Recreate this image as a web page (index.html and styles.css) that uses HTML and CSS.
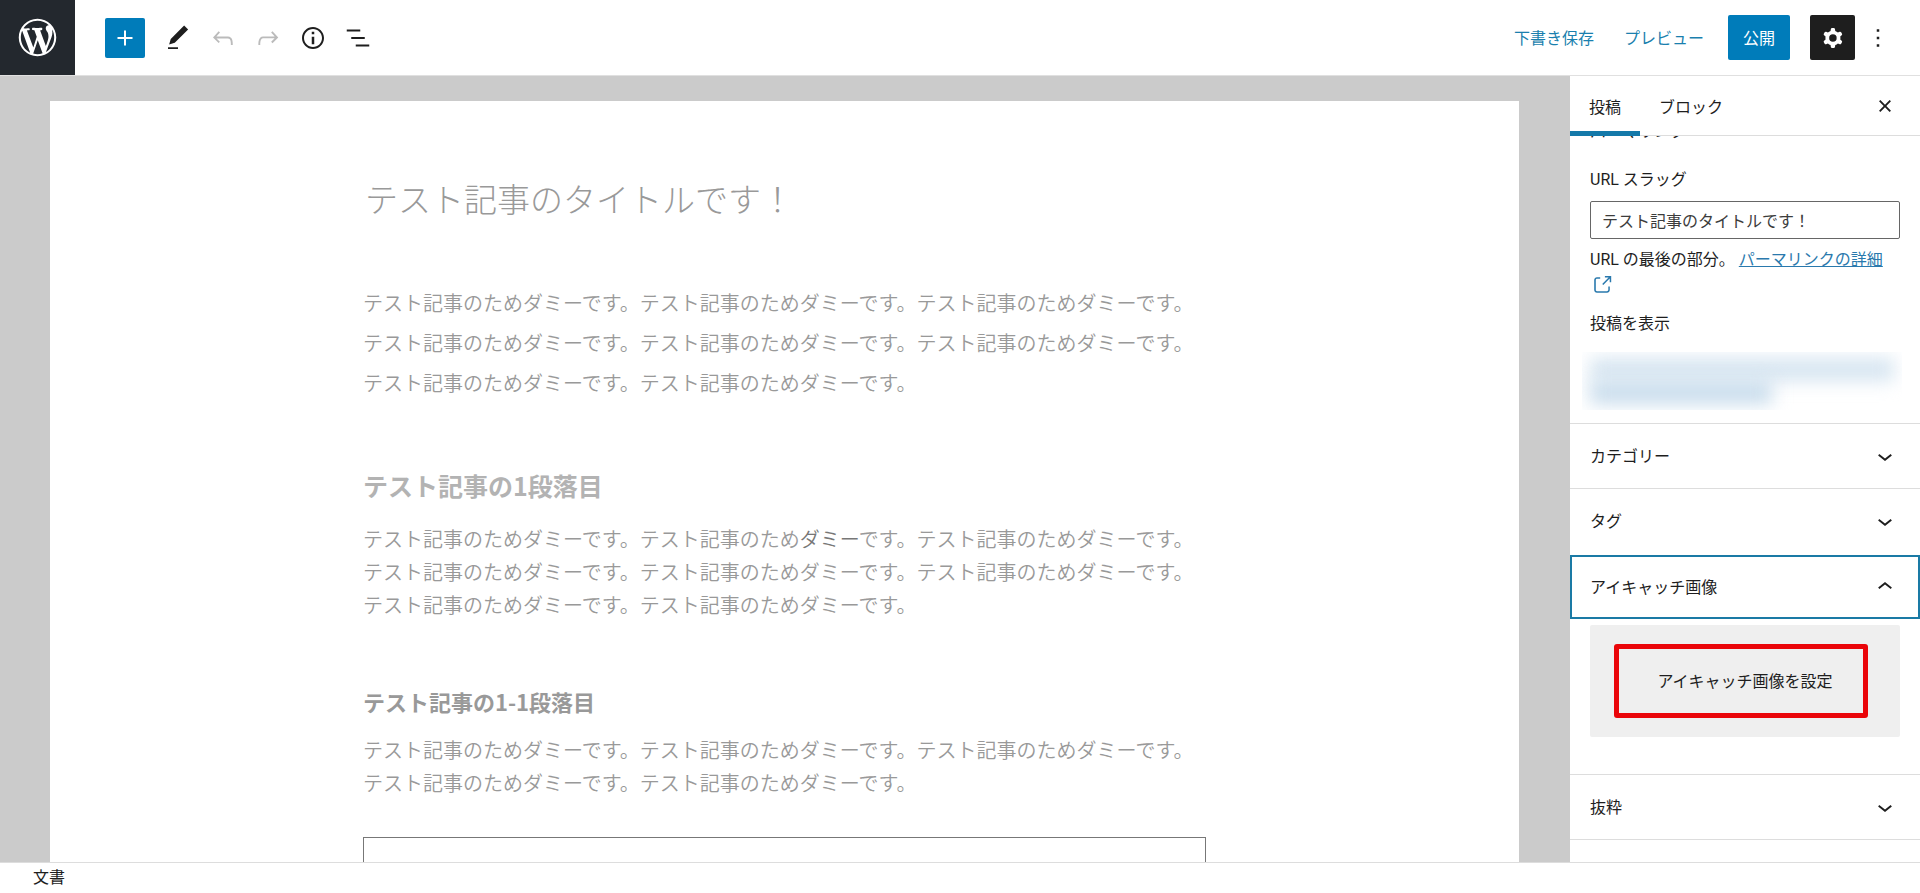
FILE: index.html
```html
<!DOCTYPE html>
<html lang="ja">
<head>
  <meta charset="UTF-8">
  <title>投稿を編集</title>
  <link rel="stylesheet" href="styles.css">
</head>
<body>

  <!-- Top toolbar -->
  <header class="header">
    <a class="logo" href="#" aria-label="WordPress">
      <svg viewBox="-2 -2 24 24" width="45" height="45"><path d="M20 10c0-5.51-4.49-10-10-10C4.48 0 0 4.49 0 10c0 5.52 4.48 10 10 10 5.51 0 10-4.48 10-10zM7.78 15.37L4.37 6.22c.55-.02 1.17-.08 1.17-.08.5-.06.44-1.13-.06-1.11 0 0-1.45.11-2.37.11-.18 0-.37 0-.58-.01C4.12 2.69 6.87 1.11 10 1.11c2.33 0 4.45.87 6.05 2.34-.68-.11-1.65.39-1.65 1.58 0 .74.45 1.36.9 2.1.35.61.55 1.36.55 2.46 0 1.49-1.4 5-1.4 5l-3.03-8.37c.54-.02.82-.17.82-.17.5-.05.44-1.25-.06-1.22 0 0-1.44.12-2.38.12-.87 0-2.33-.12-2.33-.12-.5-.03-.56 1.2-.06 1.22l.92.08 1.26 3.41zM17.41 10c.24-.64.74-1.87.43-4.25.7 1.29 1.05 2.71 1.05 4.25 0 3.29-1.73 6.24-4.4 7.78.97-2.59 1.94-5.2 2.92-7.78zM6.1 18.09C3.12 16.65 1.11 13.53 1.11 10c0-1.3.23-2.48.72-3.59C3.25 10.3 4.67 14.2 6.1 18.09zm4.03-6.63l2.58 6.98c-.86.29-1.76.45-2.71.45-.79 0-1.57-.11-2.29-.33.81-2.38 1.62-4.74 2.42-7.1z"/></svg>
    </a>
    <div class="tools">
      <button class="icon-button inserter" aria-label="ブロックを追加">
        <svg class="icon" viewBox="0 0 24 24"><path d="M18 11.2h-5.2V6h-1.6v5.2H6v1.6h5.2V18h1.6v-5.2H18z"/></svg>
      </button>
      <button class="icon-button" aria-label="ツール">
        <svg class="icon" viewBox="0 0 24 24"><path d="M20.1 5.1L16.9 2 6.2 12.7l-1.3 4.4 4.5-1.3L20.1 5.1zM4 20.8h8v-1.5H4v1.5z"/></svg>
      </button>
      <button class="icon-button" aria-label="元に戻す" disabled>
        <svg class="icon" viewBox="0 0 24 24"><path d="M18.3 11.7c-.6-.6-1.4-.9-2.3-.9H6.7l2.9-3.3-1.1-1-4.5 5L8.5 16l1-1-2.7-2.7H16c.5 0 .9.2 1.3.5 1 1 1 3.4 1 4.5v.3h1.5v-.2c0-1.5 0-4.3-1.5-5.7z"/></svg>
      </button>
      <button class="icon-button" aria-label="やり直す" disabled>
        <svg class="icon" viewBox="0 0 24 24"><path d="M15.6 6.5l-1.1 1 2.9 3.3H8c-.9 0-1.7.3-2.3.9-1.4 1.5-1.4 4.2-1.4 5.6v.2h1.5v-.3c0-1.1 0-3.5 1-4.5.3-.3.7-.5 1.3-.5h9.2L14.5 15l1.1 1.1 4.6-4.6-4.6-5z"/></svg>
      </button>
      <button class="icon-button" aria-label="詳細">
        <svg class="icon" viewBox="0 0 24 24"><path d="M12 3.2c-4.8 0-8.8 3.9-8.8 8.8 0 4.8 3.9 8.8 8.8 8.8 4.8 0 8.8-3.9 8.8-8.8 0-4.8-4-8.8-8.8-8.8zm0 16c-4 0-7.2-3.3-7.2-7.2C4.8 8 8 4.8 12 4.8s7.2 3.3 7.2 7.2c0 4-3.2 7.2-7.2 7.2zM11 17h2v-6h-2v6zm0-8h2V7h-2v2z"/></svg>
      </button>
      <button class="icon-button" aria-label="リスト表示">
        <svg class="icon" viewBox="0 0 24 24"><path d="M13.8 5.2H3v1.5h10.8V5.2zm-3.6 12v1.5H21v-1.5H10.2zm7.2-6H6.6v1.5h10.8v-1.5z"/></svg>
      </button>
    </div>
    <div class="actions">
      <button class="text-button">下書き保存</button>
      <button class="text-button">プレビュー</button>
      <button class="publish">公開</button>
      <button class="icon-button settings" aria-label="設定">
        <svg class="icon" viewBox="0 0 24 24"><path fill-rule="evenodd" d="M10.289 4.836A1 1 0 0111.275 4h1.306a1 1 0 01.987.836l.244 1.466c.787.26 1.503.679 2.108 1.218l1.393-.522a1 1 0 011.216.437l.653 1.13a1 1 0 01-.23 1.273l-1.148.944a6.025 6.025 0 010 2.435l1.149.946a1 1 0 01.23 1.272l-.653 1.13a1 1 0 01-1.216.437l-1.394-.522c-.605.54-1.32.958-2.108 1.218l-.244 1.466a1 1 0 01-.987.836h-1.306a1 1 0 01-.986-.836l-.244-1.466a5.995 5.995 0 01-2.108-1.218l-1.394.522a1 1 0 01-1.217-.436l-.653-1.131a1 1 0 01.23-1.272l1.149-.946a6.026 6.026 0 010-2.435l-1.148-.944a1 1 0 01-.23-1.272l.653-1.131a1 1 0 011.217-.437l1.393.522a5.994 5.994 0 012.108-1.218l.244-1.466zM14.929 12a3 3 0 11-6 0 3 3 0 016 0z"/></svg>
      </button>
      <button class="icon-button" aria-label="オプション">
        <svg class="icon" viewBox="0 0 24 24"><path d="M13 19h-2v-2h2v2zm0-6h-2v-2h2v2zm0-6h-2V5h2v2z"/></svg>
      </button>
    </div>
  </header>

  <div class="main">

    <!-- Post content -->
    <main class="editor">
      <article class="canvas">
        <div class="post">
          <h1 class="post-title">テスト記事のタイトルです！</h1>
          <p class="lead">テスト記事のためダミーです。テスト記事のためダミーです。テスト記事のためダミーです。テスト記事のためダミーです。テスト記事のためダミーです。テスト記事のためダミーです。テスト記事のためダミーです。テスト記事のためダミーです。</p>
          <h2>テスト記事の1段落目</h2>
          <p>テスト記事のためダミーです。テスト記事のため<span class="dark">ダミー</span>です。テスト記事のためダミーです。テスト記事のためダミーです。テスト記事のためダミーです。テスト記事のためダミーです。テスト記事のためダミーです。テスト記事のためダミーです。</p>
          <h3>テスト記事の1-1段落目</h3>
          <p>テスト記事のためダミーです。テスト記事のためダミーです。テスト記事のためダミーです。テスト記事のためダミーです。テスト記事のためダミーです。</p>
          <div class="box"></div>
        </div>
      </article>
    </main>

    <!-- Settings sidebar -->
    <aside class="sidebar">
      <div class="tabs">
        <button class="tab active">投稿</button>
        <button class="tab">ブロック</button>
        <button class="close" aria-label="設定を閉じる">
          <svg class="icon" viewBox="0 0 24 24"><path d="M12 13.06l3.712 3.713 1.061-1.06L13.061 12l3.712-3.712-1.06-1.06L12 10.938 8.288 7.227l-1.061 1.06L10.939 12l-3.712 3.712 1.06 1.061L12 13.061z"/></svg>
        </button>
      </div>

      <div class="panels">
        <section class="permalink">
          <h2 class="permalink-title">パーマリンク</h2>
          <label class="label" for="slug">URL スラッグ</label>
          <input class="input" id="slug" type="text" value="テスト記事のタイトルです！">
          <p class="help">URL の最後の部分。 <a href="#">パーマリンクの詳細<svg class="external" viewBox="0 0 24 24"><path d="M18.2 17c0 .7-.6 1.2-1.2 1.2H7c-.7 0-1.2-.6-1.2-1.2V7c0-.7.6-1.2 1.2-1.2h3.2V4.2H7C5.5 4.2 4.2 5.5 4.2 7v10c0 1.5 1.2 2.8 2.8 2.8h10c1.5 0 2.8-1.2 2.8-2.8v-3.6h-1.5V17zM14.9 3v1.5h3.7l-6.4 6.4 1.1 1.1 6.4-6.4v3.7h1.5V3h-6.3z"/></svg></a></p>
          <p class="view">投稿を表示</p>
          <div class="hidden-url">
            <div class="hidden-line"></div>
            <div class="hidden-line short"></div>
          </div>
        </section>

        <button class="panel-toggle">カテゴリー
          <svg class="icon" viewBox="0 0 24 24"><path d="M17.5 11.6L12 16l-5.5-4.4.9-1.2L12 14l4.5-3.6 1 1.2z"/></svg>
        </button>
        <button class="panel-toggle">タグ
          <svg class="icon" viewBox="0 0 24 24"><path d="M17.5 11.6L12 16l-5.5-4.4.9-1.2L12 14l4.5-3.6 1 1.2z"/></svg>
        </button>
        <button class="panel-toggle open">アイキャッチ画像
          <svg class="icon" viewBox="0 0 24 24"><path d="M6.5 12.4L12 8l5.5 4.4-.9 1.2L12 10l-4.5 3.6-1-1.2z"/></svg>
        </button>
        <div class="featured">
          <button class="featured-button">アイキャッチ画像を設定</button>
          <div class="highlight"></div>
        </div>
        <button class="panel-toggle">抜粋
          <svg class="icon" viewBox="0 0 24 24"><path d="M17.5 11.6L12 16l-5.5-4.4.9-1.2L12 14l4.5-3.6 1 1.2z"/></svg>
        </button>
        <div class="panel-end"></div>
      </div>
    </aside>
  </div>

  <footer class="footer">文書</footer>

</body>
</html>
```

FILE: styles.css
```css
* { box-sizing: border-box; }
body { margin: 0; height: 100vh; display: flex; flex-direction: column; overflow: hidden; background: #fff; color: #1e1e1e; font-family: Roboto, "Noto Sans CJK JP", sans-serif; font-size: 16px; line-height: 24px; }
button { margin: 0; padding: 0; border: none; background: none; color: inherit; font: inherit; cursor: pointer; }
h1, h2, h3, p { margin: 0; }
svg { fill: currentColor; }
.icon { display: block; width: 30px; height: 30px; }

/* Header */
.header { flex: none; display: flex; align-items: center; height: 76px; border-bottom: 1px solid #e0e0e0; }
.logo { display: flex; align-items: center; justify-content: center; width: 75px; height: 75px; background: #23282e; color: #fff; }
.tools { display: flex; align-items: center; margin-left: 30px; }
.icon-button { display: flex; align-items: center; justify-content: center; width: 45px; height: 45px; border-radius: 2px; }
.icon-button:disabled { color: #bbb; }
.inserter { width: 40px; height: 40px; margin-right: 10px; background: #007cba; color: #fff; }
.actions { display: flex; align-items: center; margin-left: auto; padding-right: 20px; }
.text-button { height: 45px; padding: 3px 15px 0; color: #1a7fae; }
.publish { height: 45px; margin: 0 20px 0 9px; padding: 3px 15px 0; border-radius: 2px; background: #007cba; color: #fff; }
.settings { background: #1e1e1e; color: #fff; }

.main { flex: 1; display: flex; min-height: 0; }

/* Editor */
.editor { flex: 1; overflow: hidden; padding: 25px 51px 0 50px; background: #cbcbcb; }
.canvas { min-height: 100%; padding-top: 77px; background: #fff; }
.post { max-width: 843px; margin: 0 auto; color: #999; font-family: "Noto Sans CJK JP", sans-serif; font-size: 20px; font-weight: 350; line-height: 33px; }
.post-title { margin-bottom: 65px; padding-left: 2px; font-size: 33px; font-weight: 200; line-height: 40px; }
.post .lead { line-height: 40px; }
.post h2 { margin: 66px 0 20px; color: #b3b3b3; font-size: 25px; font-weight: 700; line-height: 33px; }
.post h3 { margin: 64px 0 15px; color: #999; font-size: 22px; font-weight: 700; line-height: 33px; }
.dark { color: #777; }
.box { height: 120px; margin-top: 38px; border: 1px solid #777; }

/* Sidebar */
.sidebar { width: 350px; display: flex; flex-direction: column; min-height: 0; }
.tabs { flex: none; display: flex; height: 60px; border-bottom: 1px solid #ddd; }
.tab { margin-bottom: -1px; padding: 3px 19px 0; }
.tab.active { box-shadow: inset 0 -5px #1479a9; }
.close { margin-left: auto; padding-right: 20px; }
.panels { overflow: hidden; }
.permalink { padding: 0 20px; }
.permalink-title { margin-top: -16px; font-size: 16px; font-weight: 400; line-height: 24px; }
.label { display: block; margin-top: 24px; }
.input { display: block; width: 100%; height: 38px; margin: 9px 0 9px; padding: 0 11px; border: 1px solid #666; border-radius: 2px; background: #fff; color: #3c3c3c; font: inherit; }
.help a { color: #2a79ad; }
.external { width: 24px; height: 24px; vertical-align: middle; }
.view { margin-top: 15px; }
.hidden-url { height: 58px; margin: 16px -2px 13px -8px; padding: 6px 8px; overflow: hidden; }
.hidden-line { height: 23px; background: #d6e5f1; filter: blur(9px); }
.hidden-line.short { width: 60%; background: #c8dcec; }
.panel-toggle { display: flex; align-items: center; justify-content: space-between; width: 100%; height: 65px; padding: 3px 20px 0; border-top: 1px solid #ddd; }
.panel-toggle .icon { margin-top: -3px; }
.open { height: 64px; margin-top: 2px; border: 2px solid #1a7aa5; padding: 3px 18px 0; }
.featured { position: relative; padding: 6px 20px 37px; }
.featured-button { display: block; width: 100%; height: 112px; padding-top: 2px; border-radius: 2px; background: #efefef; }
.highlight { position: absolute; top: 25px; right: 52px; left: 44px; height: 74px; border: 5px solid #ea0509; border-radius: 3px; pointer-events: none; }
.panel-end { height: 22px; border-top: 1px solid #ddd; }

/* Footer */
.footer { flex: none; height: 31px; padding: 3px 33px; border-top: 1px solid #ddd; }
```
